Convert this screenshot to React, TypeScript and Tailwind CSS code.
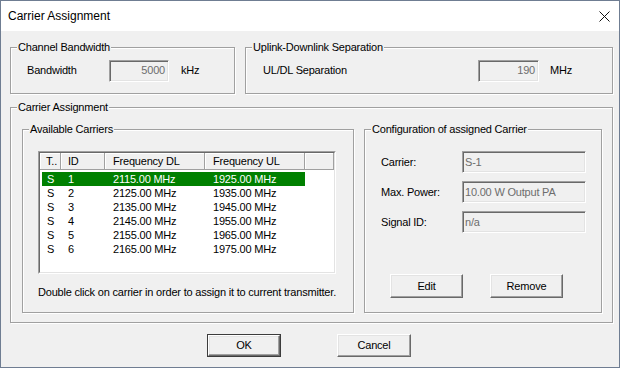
import React from "react";

function GroupBox({
  title,
  className = "",
  children,
}: {
  title: string;
  className?: string;
  children?: React.ReactNode;
}) {
  return (
    <div
      className={`relative border border-[#a0a0a0] shadow-[inset_1px_1px_0_#fff,1px_1px_0_#fff] ${className}`}
    >
      <span className="absolute -top-[7px] left-[6px] bg-[#f0f0f0] px-[1px] leading-[13px] whitespace-nowrap">
        {title}
      </span>
      {children}
    </div>
  );
}

function Field({
  children,
  className = "",
}: {
  children?: React.ReactNode;
  className?: string;
}) {
  return (
    <div
      className={`h-[22px] flex items-center bg-[#f0f0f0] text-[#6d6d6d] border border-t-[#a0a0a0] border-l-[#a0a0a0] border-r-white border-b-white shadow-[inset_1px_1px_0_#696969,inset_-1px_-1px_0_#e3e3e3] ${className}`}
    >
      {children}
    </div>
  );
}

function Btn({
  children,
  className = "",
  def = false,
}: {
  children?: React.ReactNode;
  className?: string;
  def?: boolean;
}) {
  const inner = (
    <div className="h-full w-full flex items-center justify-center bg-[#f0f0f0] border border-t-white border-l-white border-r-[#696969] border-b-[#696969] shadow-[inset_-1px_-1px_0_#a0a0a0,inset_1px_1px_0_#e3e3e3]">
      {children}
    </div>
  );
  if (def) {
    return <div className={`border border-[#3c3c3c] ${className}`}>{inner}</div>;
  }
  return <div className={className}>{inner}</div>;
}

const rows = [
  ["S", "1", "2115.00 MHz", "1925.00 MHz"],
  ["S", "2", "2125.00 MHz", "1935.00 MHz"],
  ["S", "3", "2135.00 MHz", "1945.00 MHz"],
  ["S", "4", "2145.00 MHz", "1955.00 MHz"],
  ["S", "5", "2155.00 MHz", "1965.00 MHz"],
  ["S", "6", "2165.00 MHz", "1975.00 MHz"],
];

function HeaderCell({
  children,
  className = "",
}: {
  children?: React.ReactNode;
  className?: string;
}) {
  return (
    <div
      className={`h-full flex items-center whitespace-nowrap overflow-hidden border-r border-b border-[#a0a0a0] shadow-[inset_1px_1px_0_#fff] ${className}`}
    >
      {children}
    </div>
  );
}

function ListView() {
  return (
    <div className="w-[298px] h-[123px] border border-t-[#a0a0a0] border-l-[#a0a0a0] border-r-white border-b-white">
      <div className="w-full h-full bg-white border border-t-[#696969] border-l-[#696969] border-r-[#e3e3e3] border-b-[#e3e3e3] flex flex-col">
        <div className="h-[17px] flex bg-[#f0f0f0] shrink-0">
          <HeaderCell className="w-[21px] pl-[6px]">T..</HeaderCell>
          <HeaderCell className="w-[44px] pl-[7px]">ID</HeaderCell>
          <HeaderCell className="w-[100px] pl-[8px]">Frequency DL</HeaderCell>
          <HeaderCell className="w-[100px] pl-[8px]">Frequency UL</HeaderCell>
          <HeaderCell className="flex-1" />
        </div>
        <div className="mt-[2px] flex flex-col">
          {rows.map((r, i) => (
            <div
              key={i}
              className={`ml-[2px] w-[263px] h-[14px] flex items-center whitespace-nowrap ${
                i === 0 ? "bg-[#008000] text-white" : "text-black"
              }`}
            >
              <div className="w-[19px] pl-[5px]">{r[0]}</div>
              <div className="w-[44px] pl-[7px]">{r[1]}</div>
              <div className="w-[100px] pl-[8px]">{r[2]}</div>
              <div className="w-[100px] pl-[8px]">{r[3]}</div>
            </div>
          ))}
        </div>
      </div>
    </div>
  );
}

export default function App() {
  return (
    <div className="w-[620px] h-[368px] border border-[#6f7d92] flex flex-col bg-[#f0f0f0] font-['Liberation_Sans',Arial,sans-serif] text-[11px] leading-[13px] tracking-[-0.2px] text-black overflow-hidden">
      {/* Title bar */}
      <div className="h-[30px] shrink-0 bg-white flex items-center pl-[7px] pr-[9px]">
        <span className="text-[12px] leading-[16px] tracking-normal">Carrier Assignment</span>
        <svg className="ml-auto" width="11" height="11" viewBox="0 0 11 11">
          <path d="M0.5 0.5L10.5 10.5M10.5 0.5L0.5 10.5" stroke="#111" strokeWidth="1" />
        </svg>
      </div>

      {/* Body */}
      <div className="flex-1 flex flex-col pl-[9px] pr-[6px]">
        {/* Row 1 */}
        <div className="flex mt-[16px] gap-[10px]">
          <GroupBox
            title="Channel Bandwidth"
            className="w-[225px] h-[47px] flex items-center pl-[16px]"
          >
            <span className="w-[82px]">Bandwidth</span>
            <Field className="w-[60px] justify-end pr-[3px]">5000</Field>
            <span className="ml-[12px]">kHz</span>
          </GroupBox>
          <GroupBox
            title="Uplink-Downlink Separation"
            className="w-[368px] h-[47px] flex items-center pl-[17px]"
          >
            <span className="w-[215px]">UL/DL Separation</span>
            <Field className="w-[61px] justify-end pr-[3px]">190</Field>
            <span className="ml-[11px]">MHz</span>
          </GroupBox>
        </div>

        {/* Carrier Assignment */}
        <GroupBox
          title="Carrier Assignment"
          className="mt-[13px] h-[216px] flex gap-[10px] pt-[21px] pl-[11px]"
        >
          <GroupBox title="Available Carriers" className="w-[332px] h-[184px] flex flex-col pl-[15px] pt-[21px]">
            <ListView />
            <div className="mt-[12px] whitespace-nowrap">
              Double click on carrier in order to assign it to current transmitter.
            </div>
          </GroupBox>
          <GroupBox
            title="Configuration of assigned Carrier"
            className="w-[238px] h-[184px] flex flex-col pl-[16px] pt-[21px]"
          >
            <div className="flex items-center">
              <span className="w-[81px]">Carrier:</span>
              <Field className="w-[124px] pl-[2px]">S-1</Field>
            </div>
            <div className="flex items-center mt-[8px]">
              <span className="w-[81px]">Max. Power:</span>
              <Field className="w-[124px] pl-[2px]">10.00 W Output PA</Field>
            </div>
            <div className="flex items-center mt-[8px]">
              <span className="w-[81px]">Signal ID:</span>
              <Field className="w-[124px] pl-[2px]">n/a</Field>
            </div>
            <div className="flex gap-[27px] mt-[41px] ml-[9px]">
              <Btn className="w-[73px] h-[24px]">Edit</Btn>
              <Btn className="w-[73px] h-[24px]">Remove</Btn>
            </div>
          </GroupBox>
        </GroupBox>

        {/* Bottom buttons */}
        <div className="flex justify-center gap-[56px] mt-[11px] pr-[5px]">
          <Btn def className="w-[74px] h-[23px]">OK</Btn>
          <Btn className="w-[74px] h-[23px]">Cancel</Btn>
        </div>
      </div>
    </div>
  );
}
